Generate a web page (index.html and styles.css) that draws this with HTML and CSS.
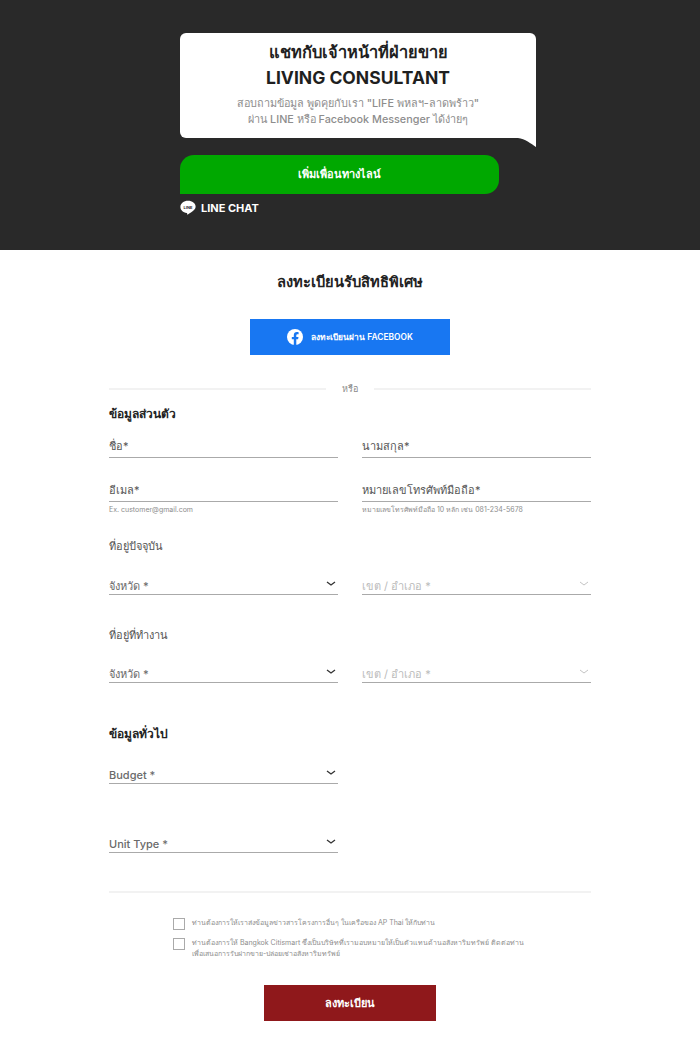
FILE: index.html
```html
<!DOCTYPE html>
<html lang="th">
<head>
<meta charset="utf-8">
<title>ลงทะเบียนรับสิทธิพิเศษ</title>
<link rel="stylesheet" href="styles.css">
</head>
<body>
<header class="hero">
  <div class="hero-inner">
    <div class="bubble">
      <h1 class="bubble-title">แชทกับเจ้าหน้าที่ฝ่ายขาย<br><span class="bubble-latin">LIVING CONSULTANT</span></h1>
      <p class="bubble-text">สอบถามข้อมูล พูดคุยกับเรา "LIFE พหลฯ-ลาดพร้าว"<br>ผ่าน LINE หรือ Facebook Messenger ได้ง่ายๆ</p>
      <svg class="bubble-tail" width="18" height="9" viewBox="0 0 18 9"><path d="M0 0H18V9C13 5.500 7 1 0 0Z" fill="#fff"/></svg>
    </div>
    <a class="line-btn">เพิ่มเพื่อนทางไลน์</a>
    <div class="line-chat">
      <svg width="16" height="16" viewBox="0 0 16 16"><path d="M8 .8C3.800.8.400 3.500.400 6.900c0 3 2.700 5.500 6.300 6 .6.100.5.400.4 1-.1.500.2.800.8.500 1.500-.8 4.600-2.700 6.100-4.400 1-1.100 1.600-2.300 1.600-3.600C15.600 3.500 12.200.8 8 .8Z" fill="#fff"/><text x="8" y="8.700" text-anchor="middle" class="line-mark">LINE</text></svg>
      <span>LINE CHAT</span>
    </div>
  </div>
</header>
<main class="content">
  <h2 class="page-title">ลงทะเบียนรับสิทธิพิเศษ</h2>
  <a class="fb-btn">
    <svg width="16" height="16" viewBox="0 0 16 16"><circle cx="8" cy="8" r="8" fill="#fff"/><path d="M11.100 10.300l.4-2.300H9.300V6.500c0-.6.300-1.200 1.300-1.200h1V3.300s-.9-.2-1.800-.2C8 3.100 6.800 4.300 6.800 6.200V8h-2v2.300h2v5.600c.8.100 1.700.100 2.500 0v-5.600Z" fill="#1877f2"/></svg>
    <span>ลงทะเบียนผ่าน FACEBOOK</span>
  </a>
  <form class="form">
    <div class="or"><span>หรือ</span></div>
    <h3 class="section-title">ข้อมูลส่วนตัว</h3>
    <div class="row row-name">
      <div class="field"><span class="label">ชื่อ*</span></div>
      <div class="field"><span class="label">นามสกุล*</span></div>
    </div>
    <div class="row row-contact">
      <div><div class="field"><span class="label">อีเมล*</span></div><p class="hint">Ex. customer@gmail.com</p></div>
      <div><div class="field"><span class="label">หมายเลขโทรศัพท์มือถือ*</span></div><p class="hint">หมายเลขโทรศัพท์มือถือ 10 หลัก เช่น 081-234-5678</p></div>
    </div>
    <h4 class="address-title address-home">ที่อยู่ปัจจุบัน</h4>
    <div class="row row-home">
      <div class="select"><span>จังหวัด *</span><svg class="chev" width="10" height="6" viewBox="0 0 10 6"><path d="M1 1l4 3L9 1" fill="none" stroke="#333" stroke-width="1.300"/></svg></div>
      <div class="select disabled"><span>เขต / อำเภอ *</span><svg class="chev" width="10" height="6" viewBox="0 0 10 6"><path d="M1 1l4 3L9 1" fill="none" stroke="#c4c4c4" stroke-width="1"/></svg></div>
    </div>
    <h4 class="address-title address-work">ที่อยู่ที่ทำงาน</h4>
    <div class="row row-work">
      <div class="select"><span>จังหวัด *</span><svg class="chev" width="10" height="6" viewBox="0 0 10 6"><path d="M1 1l4 3L9 1" fill="none" stroke="#333" stroke-width="1.300"/></svg></div>
      <div class="select disabled"><span>เขต / อำเภอ *</span><svg class="chev" width="10" height="6" viewBox="0 0 10 6"><path d="M1 1l4 3L9 1" fill="none" stroke="#c4c4c4" stroke-width="1"/></svg></div>
    </div>
    <h3 class="section-title section-general">ข้อมูลทั่วไป</h3>
    <div class="row row-budget">
      <div class="select"><span>Budget *</span><svg class="chev" width="10" height="6" viewBox="0 0 10 6"><path d="M1 1l4 3L9 1" fill="none" stroke="#333" stroke-width="1.300"/></svg></div>
    </div>
    <div class="row row-unit">
      <div class="select"><span>Unit Type *</span><svg class="chev" width="10" height="6" viewBox="0 0 10 6"><path d="M1 1l4 3L9 1" fill="none" stroke="#333" stroke-width="1.300"/></svg></div>
    </div>
    <hr class="rule">
    <div class="consents">
      <div class="consent consent-first"><span class="box"></span><p>ท่านต้องการให้เราส่งข้อมูลข่าวสารโครงการอื่นๆ ในเครือของ AP Thai ให้กับท่าน</p></div>
      <div class="consent"><span class="box"></span><p>ท่านต้องการให้ Bangkok Citismart ซึ่งเป็นบริษัทที่เรามอบหมายให้เป็นตัวแทนด้านอสังหาริมทรัพย์ ติดต่อท่าน<br>เพื่อเสนอการรับฝากขาย-ปล่อยเช่าอสังหาริมทรัพย์</p></div>
    </div>
    <a class="submit">ลงทะเบียน</a>
  </form>
</main>
</body>
</html>
```
FILE: styles.css
```css
* { box-sizing: border-box; }
html, body { margin: 0; padding: 0; }
body {
  background: #fff;
  color: #222;
  font-family: Inter, "Noto Sans", "DejaVu Sans", sans-serif;
  height: 1047px;
  overflow: hidden;
}
h1, h2, h3, h4, p { margin: 0; }

.hero { background: #292929; height: 250px; padding-top: 33px; }
.hero-inner { width: 356px; margin-left: 180px; }
.bubble {
  position: relative;
  background: #fff;
  border-radius: 6px 6px 0 6px;
  height: 105px;
  padding-top: 7px;
  text-align: center;
}
.bubble-title { font-size: 16.400px; line-height: 25px; font-weight: 600; color: #1f1f1f; }
.bubble-latin { font-size: 17.500px; font-weight: 700; }
.bubble-text { margin-top: 5px; font-size: 10.800px; line-height: 16px; font-weight: 500; color: #8d8d8d; }
.bubble-tail { position: absolute; right: 0; top: 100%; display: block; }
.line-btn {
  display: block;
  width: 319px;
  height: 39px;
  margin-top: 17px;
  background: #00a800;
  border-radius: 14px 14px 14px 0;
  color: #fff;
  font-size: 11px;
  font-weight: 700;
  line-height: 39px;
  text-align: center;
}
.line-chat { display: flex; align-items: center; gap: 5px; margin-top: 6px; height: 16px; color: #fff; font-size: 11px; font-weight: 700; }
.line-mark { font-size: 4px; font-weight: 700; fill: #292929; }

.content { padding-top: 21px; }
.page-title { height: 22px; font-size: 14.700px; line-height: 22px; font-weight: 700; text-align: center; color: #222; }
.fb-btn {
  display: flex;
  align-items: center;
  justify-content: center;
  gap: 8px;
  width: 200px;
  height: 36px;
  margin: 26px auto 0;
  background: #1877f2;
  color: #fff;
  font-size: 8.400px;
  font-weight: 600;
}
.form { width: 482px; margin: 27px 0 0 109px; }
.or { display: flex; align-items: center; gap: 16px; height: 14px; color: #8a8a8a; font-size: 9px; font-weight: 500; }
.or::before, .or::after { content: ""; flex: 1; height: 2px; background: #f2f2f2; }
.section-title { margin-top: 8px; height: 20px; font-size: 12px; line-height: 20px; font-weight: 700; color: #222; }
.section-general { margin-top: 41px; }

.row { display: grid; grid-template-columns: 229px 229px; column-gap: 24px; }
.row-name { margin-top: 13px; }
.row-contact { margin-top: 23px; }
.row-home { margin-top: 17px; }
.row-work { margin-top: 16px; }
.row-budget { margin-top: 18px; }
.row-unit { margin-top: 47px; }
.field { height: 21px; border-bottom: 1px solid #aaa; font-size: 11px; line-height: 18px; color: #555; }
.hint { margin-top: 3px; height: 10px; font-size: 7px; line-height: 10px; color: #8d8d8d; white-space: nowrap; }
.address-title { font-size: 11px; line-height: 20px; font-weight: 400; color: #555; height: 20px; }
.address-home { margin-top: 21px; }
.address-work { margin-top: 30px; }

.select { display: flex; justify-content: space-between; height: 22px; padding-right: 2px; border-bottom: 1px solid #aaa; font-size: 11px; line-height: 27px; font-weight: 500; color: #6a6a6a; }
.select.disabled { color: #bbb; font-weight: 400; }
.chev { margin-top: 8px; }

.rule { height: 2px; margin: 38px 0 0; border: 0; background: #f2f2f2; }
.consents { margin-left: 64px; padding-top: 24px; }
.consent { display: flex; gap: 7px; font-size: 7px; line-height: 11px; color: #8d8d8d; }
.consent p { white-space: nowrap; }
.consent-first { margin-bottom: 7px; }
.box { flex: none; width: 12px; height: 12px; margin-top: 1px; border: 1px solid #aaa; }
.submit {
  display: block;
  width: 172px;
  height: 36px;
  margin: 26px 0 0 155px;
  background: #8f181b;
  color: #fff;
  font-size: 11px;
  font-weight: 700;
  line-height: 36px;
  text-align: center;
}
```
